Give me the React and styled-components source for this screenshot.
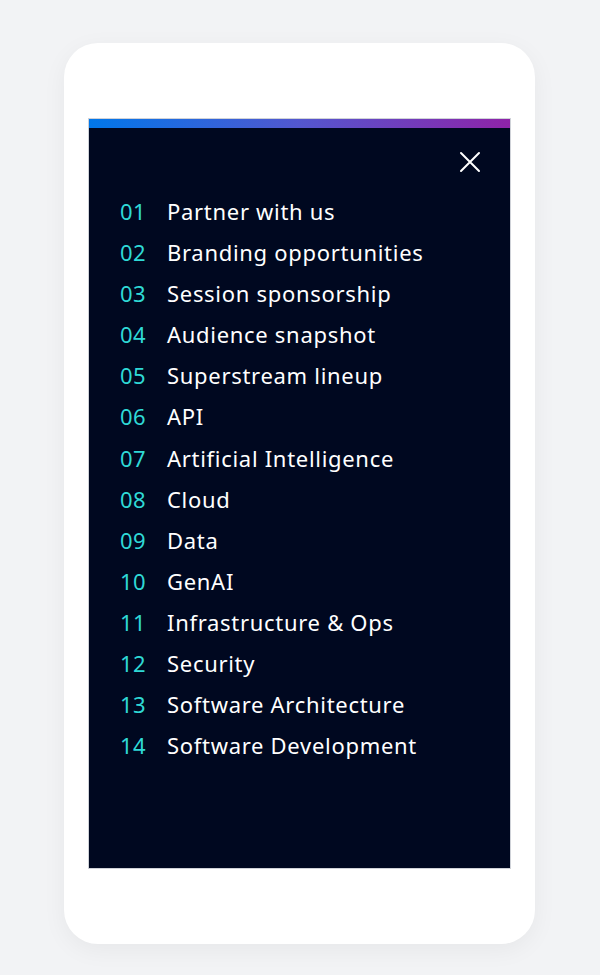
import styled, { createGlobalStyle } from 'styled-components';

const items = [
  'Partner with us',
  'Branding opportunities',
  'Session sponsorship',
  'Audience snapshot',
  'Superstream lineup',
  'API',
  'Artificial Intelligence',
  'Cloud',
  'Data',
  'GenAI',
  'Infrastructure & Ops',
  'Security',
  'Software Architecture',
  'Software Development',
];

export default function App() {
  return (
    <>
      <Global />
      <S.Page>
        <S.Phone>
          <S.Menu>
            <S.Bar />
            <S.Head>
              <S.Close aria-label="Close menu">
                <svg width="22" height="22" viewBox="0 0 22 22" fill="none">
                  <path d="M2 2L20 20M20 2L2 20" stroke="#fff" strokeWidth="2" strokeLinecap="round" />
                </svg>
              </S.Close>
            </S.Head>
            <S.List>
              {items.map((label, i) => (
                <S.Item key={label}>
                  <S.Num>{String(i + 1).padStart(2, '0')}</S.Num>
                  <S.Label>{label}</S.Label>
                </S.Item>
              ))}
            </S.List>
          </S.Menu>
        </S.Phone>
      </S.Page>
    </>
  );
}

const Global = createGlobalStyle`
  html, body {
    margin: 0;
    padding: 0;
    background: #f2f3f5;
  }
  * { box-sizing: border-box; }
`;

const S = {};

S.Page = styled.div`
  width: 600px;
  height: 975px;
  padding: 43px 0 0 64px;
  background: #f2f3f5;
  font-family: 'Noto Sans', 'Liberation Sans', sans-serif;
`;

S.Phone = styled.div`
  width: 471px;
  height: 901px;
  background: #fff;
  border-radius: 34px;
  box-shadow: 0 6px 24px rgb(0 0 0 / 5%);
  padding: 75px 24px 0 24px;
`;

S.Menu = styled.div`
  height: 751px;
  background: #000820;
  border: 1px solid #cfd2d8;
  display: flex;
  flex-direction: column;
`;

S.Bar = styled.div`
  height: 9px;
  background: linear-gradient(90deg, #0077ea 0%, #5357cf 50%, #8f23a8 100%);
`;

S.Head = styled.div`
  display: flex;
  justify-content: flex-end;
  padding: 23px 29px 0 0;
`;

S.Close = styled.button`
  border: 0;
  background: none;
  padding: 0;
  width: 22px;
  height: 22px;
  display: flex;
  cursor: pointer;
`;

S.List = styled.ol`
  list-style: none;
  margin: 0;
  padding: 18px 0 0 31px;
  display: flex;
  flex-direction: column;
`;

S.Item = styled.li`
  display: flex;
  align-items: baseline;
  height: 41.1px;
  font-size: 22px;
  line-height: 41px;
  letter-spacing: 0.7px;
`;

S.Num = styled.span`
  width: 47px;
  color: #2fd9d6;
  letter-spacing: 0.3px;
`;

S.Label = styled.span`
  color: #fff;
`;
